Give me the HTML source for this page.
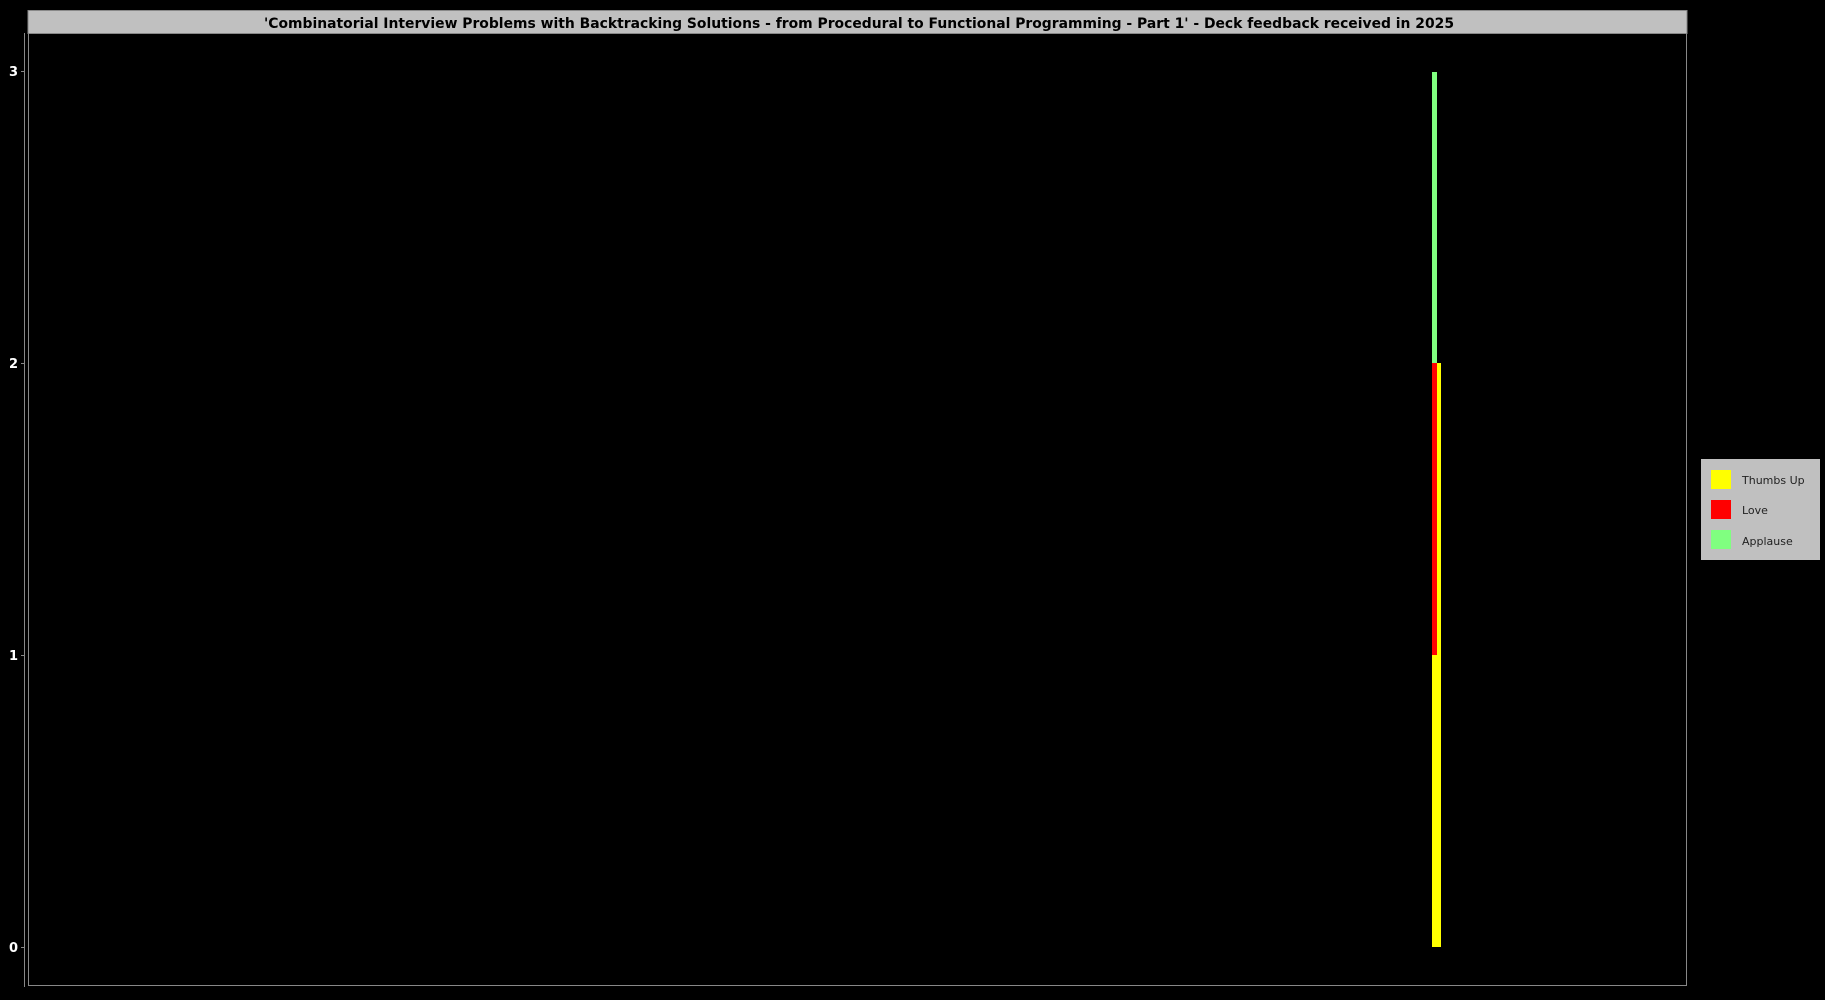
<!DOCTYPE html>
<html><head><meta charset="utf-8"><style>
html,body{margin:0;padding:0;background:#000;width:1825px;height:1000px;overflow:hidden}
</style></head><body>
<svg width="1825" height="1000" xmlns="http://www.w3.org/2000/svg" style="display:block">
<rect width="1825" height="1000" fill="#000"/>
<rect x="28" y="10.5" width="1659" height="23" fill="#c0c0c0" stroke="#888" stroke-width="1"/>
<text x="264" y="28" font-family="DejaVu Sans, Liberation Sans, sans-serif" font-weight="bold" font-size="14" fill="#000" textLength="1190" lengthAdjust="spacingAndGlyphs">'Combinatorial Interview Problems with Backtracking Solutions - from Procedural to Functional Programming - Part 1' - Deck feedback received in 2025</text>
<rect x="28.5" y="33.5" width="1658" height="952" fill="none" stroke="#888" stroke-width="1"/>
<line x1="24.5" y1="33" x2="24.5" y2="987" stroke="#888" stroke-width="1"/>
<g stroke="#888" stroke-width="1">
<line x1="21" y1="71.5" x2="24" y2="71.5"/>
<line x1="21" y1="363.5" x2="24" y2="363.5"/>
<line x1="21" y1="655.5" x2="24" y2="655.5"/>
<line x1="21" y1="947.5" x2="24" y2="947.5"/>
</g>
<g font-family="DejaVu Sans, Liberation Sans, sans-serif" font-weight="bold" font-size="13" fill="#fff" text-anchor="end">
<text x="18" y="76">3</text>
<text x="18" y="368">2</text>
<text x="18" y="660">1</text>
<text x="18" y="952">0</text>
</g>
<rect x="1432" y="72" width="5" height="291" fill="#80ff80"/>
<rect x="1432" y="363" width="5" height="292" fill="#ff0000"/>
<rect x="1437" y="363" width="4" height="584" fill="#ffff00"/>
<rect x="1432" y="655" width="5" height="292" fill="#ffff00"/>
<rect x="1701" y="459" width="119" height="101" fill="#c0c0c0"/>
<rect x="1711" y="470" width="20" height="19" fill="#ffff00"/>
<rect x="1711" y="500" width="20" height="19" fill="#ff0000"/>
<rect x="1711" y="530" width="20" height="19" fill="#80ff80"/>
<g font-family="DejaVu Sans, Liberation Sans, sans-serif" font-size="11" fill="#222">
<text x="1742" y="484">Thumbs Up</text>
<text x="1742" y="514">Love</text>
<text x="1742" y="545">Applause</text>
</g>
</svg>
</body></html>
